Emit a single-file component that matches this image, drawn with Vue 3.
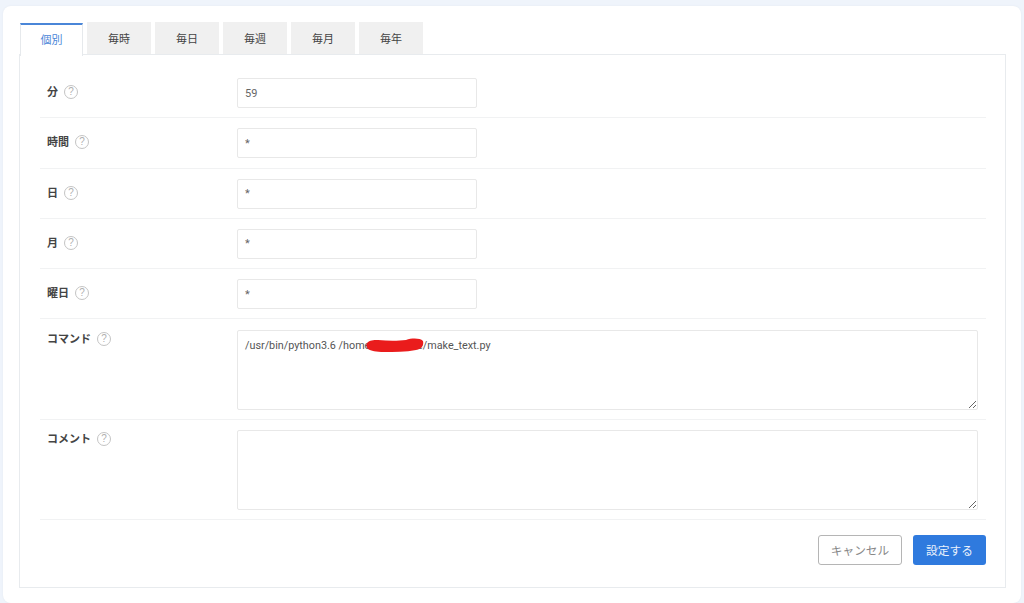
<script setup>
const tabs = ['個別', '毎時', '毎日', '毎週', '毎月', '毎年']
const fields = [
  { label: '分', value: '59' },
  { label: '時間', value: '*' },
  { label: '日', value: '*' },
  { label: '月', value: '*' },
  { label: '曜日', value: '*' },
]
const areas = [
  { label: 'コマンド', value: '/usr/bin/python3.6 /home/username/make_text.py' },
  { label: 'コメント', value: '' },
]
</script>

<template>
  <main class="page">
    <section class="card">
      <nav class="tabs">
        <button v-for="(t, i) in tabs" :key="t" class="tab" :class="{ active: i === 0 }">{{ t }}</button>
      </nav>
      <div class="panel">
        <div v-for="f in fields" :key="f.label" class="row">
          <div class="label">{{ f.label }}<span class="help">?</span></div>
          <input class="input" :value="f.value" />
        </div>
        <div v-for="(a, i) in areas" :key="a.label" class="row area-row" :class="{ 'first-area': i === 0 }">
          <div class="label area-label">{{ a.label }}<span class="help">?</span></div>
          <div class="area-wrap">
            <textarea class="area" :value="a.value"></textarea>
            <svg v-if="i === 0" class="scribble" width="60" height="16" viewBox="0 0 60 16">
              <path d="M3 6 C6 3 9 3 14 3 C24 4 34 4 42 3 C48 1 56 1 59 4 C60 8 58 12 52 13 C42 15 30 15 20 15 C12 15 7 14 4 12 C2 10 2 8 3 6Z" fill="#ea1c1c" />
            </svg>
          </div>
        </div>
        <div class="actions">
          <button class="btn cancel">キャンセル</button>
          <button class="btn submit">設定する</button>
        </div>
      </div>
    </section>
  </main>
</template>

<style>
html, body { margin: 0; background: #eff4fb; }
</style>

<style scoped>
.page {
  box-sizing: border-box;
  height: 603px;
  padding: 6px 3px 0 3px;
  overflow: hidden;
  font-family: "Noto Sans CJK JP", "Noto Sans", sans-serif;
}
.card {
  box-sizing: border-box;
  height: 597px;
  background: #fff;
  border-radius: 8px;
  padding: 16px 15px 0 16px;
  box-shadow: 0 0 2px #e3e8ef;
}
.tabs {
  display: flex;
  height: 33px;
  padding-left: 1px;
  gap: 4px;
  align-items: flex-start;
  position: relative;
  z-index: 1;
}
.tab {
  box-sizing: border-box;
  width: 64px;
  height: 32px;
  border: 0;
  background: #f0f0f0;
  color: #444;
  font: 11px "Noto Sans CJK JP", sans-serif;
  padding: 0;
}
.tab.active {
  width: 63px;
  height: 33px;
  margin-top: 1px;
  padding-bottom: 3px;
  background: #fff;
  color: #4a86d8;
  border-top: 2px solid #4a86d8;
  border-left: 1px solid #e6e9ec;
  border-right: 1px solid #e6e9ec;
}
.panel {
  box-sizing: border-box;
  height: 534px;
  margin-top: -1px;
  border: 1px solid #e8ebee;
  padding: 13px 19px 0 20px;
  display: flex;
  flex-direction: column;
}
.row {
  box-sizing: border-box;
  display: flex;
  height: 50.3px;
  flex: none;
  padding-top: 10px;
  border-bottom: 1px solid #f1f2f3;
}
.area-row { height: 100px; }
.first-area { margin-top: 0.5px; }
.label {
  width: 197px;
  padding-left: 7px;
  box-sizing: border-box;
  font-size: 11px;
  font-weight: 700;
  line-height: 16px;
  padding-top: 5px;
  color: #444;
  display: flex;
  align-items: flex-start;
}
.area-label { padding-top: 0; }
.help {
  box-sizing: border-box;
  width: 14px;
  height: 14px;
  margin: 2px 0 0 6px;
  border: 1px solid #c4c4c4;
  border-radius: 50%;
  color: #b0b0b0;
  font: 400 10px/12px "Liberation Sans", sans-serif;
  text-align: center;
}
.input {
  box-sizing: border-box;
  width: 240px;
  height: 30px;
  border: 1px solid #e8e8e8;
  border-radius: 2px;
  padding: 0 7px;
  font: 11px Roboto, sans-serif;
  color: #666;
  outline: 0;
}
.area-wrap {
  position: relative;
  flex: 0 0 741px;
  height: 80px;
}
.area {
  display: block;
  box-sizing: border-box;
  width: 741px;
  height: 80px;
  border: 1px solid #e8e8e8;
  border-radius: 2px;
  padding: 8px 7px;
  font: 10.8px/13px Roboto, sans-serif;
  color: #555;
  outline: 0;
}
.scribble {
  position: absolute;
  left: 127px;
  top: 7px;
}
.actions {
  display: flex;
  justify-content: flex-end;
  gap: 11px;
  padding-top: 15px;
}
.btn {
  box-sizing: border-box;
  height: 30px;
  border-radius: 3px;
  font: 11.7px "Noto Sans CJK JP", sans-serif;
  padding: 0;
}
.cancel {
  width: 84px;
  background: #fff;
  border: 1px solid #b5b5b5;
  color: #888;
}
.submit {
  width: 73px;
  background: #2f7ade;
  border: 0;
  color: #e9f1fc;
}
</style>
